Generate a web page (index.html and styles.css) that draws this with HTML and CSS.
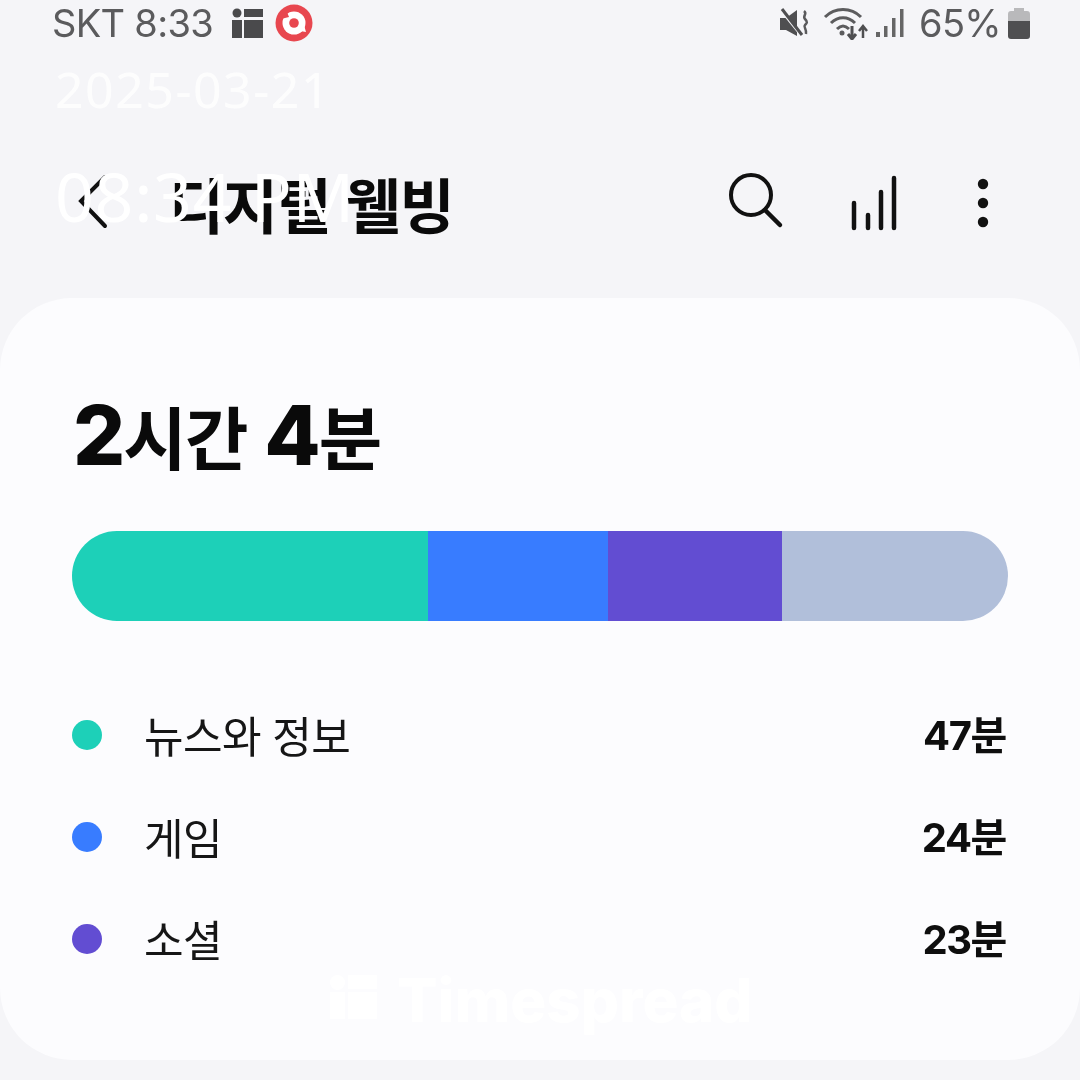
FILE: index.html
```html
<!DOCTYPE html>
<html lang="ko">
<head>
    <meta charset="utf-8">
    <title>디지털 웰빙</title>
    <link rel="stylesheet" href="styles.css">
</head>
<body>
    <div class="screen">
        <div class="status-bar">
            <div class="status-left">
                <span class="status-text">SKT 8:33</span>
                <svg class="icon-grid" width="31" height="30" viewBox="0 0 31 30">
                    <circle cx="5" cy="5" r="4.5" fill="#4a4a4c"/>
                    <rect x="12" y="1" width="19" height="8" fill="#4a4a4c"/>
                    <rect x="0" y="12" width="10" height="18" fill="#4a4a4c"/>
                    <rect x="12" y="12" width="19" height="18" fill="#4a4a4c"/>
                </svg>
                <svg class="icon-app" width="38" height="38" viewBox="0 0 38 38">
                    <circle cx="19" cy="19" r="18.5" fill="#e8474f"/>
                    <circle cx="19" cy="19" r="11.5" fill="#fff"/>
                    <path d="M25 27l6 1-2-7z" fill="#fff"/>
                    <path d="M6 15l6-7 2 5z" fill="#e8474f"/>
                    <circle cx="19" cy="19" r="4.8" fill="#e8474f"/>
                </svg>
            </div>
            <div class="status-right">
                <svg class="icon-mute" width="32" height="32" viewBox="0 0 32 32">
                    <path d="M1 11h6l11-8v26l-11-6h-6z" fill="#4f4f51"/>
                    <path d="M2 3l21 26" stroke="#f5f5f8" stroke-width="3"/>
                    <path d="M3 2l20 26" stroke="#4f4f51" stroke-width="3"/>
                    <path d="M25 4c4 3-2 5 1 8s2 4 0 6 2 4 1 9" fill="none" stroke="#5a5a5c" stroke-width="2.5"/>
                </svg>
                <svg class="icon-wifi" width="46" height="34" viewBox="0 0 46 34">
                    <path d="M2 11C12 1 28 1 38 11" fill="none" stroke="#5c5c5e" stroke-width="3"/>
                    <path d="M8 17c7-7 17-7 24 0" fill="none" stroke="#5c5c5e" stroke-width="3"/>
                    <path d="M14 23c4-4 8-4 12 0" fill="none" stroke="#5c5c5e" stroke-width="3"/>
                    <circle cx="19" cy="27" r="2.5" fill="#5c5c5e"/>
                    <path d="M29 20v11M25 28l4 5 4-5" fill="none" stroke="#4f4f51" stroke-width="3"/>
                    <path d="M40 32V20M36 25l4-5 4 5" fill="none" stroke="#4f4f51" stroke-width="2.5"/>
                </svg>
                <svg class="icon-signal" width="30" height="30" viewBox="0 0 30 30">
                    <rect x="1" y="24" width="4" height="5" fill="#666"/>
                    <rect x="9" y="18" width="3.5" height="11" fill="#666"/>
                    <rect x="17" y="10" width="3.5" height="19" fill="#666"/>
                    <rect x="25" y="1" width="3.5" height="28" fill="#666"/>
                </svg>
                <span class="status-text battery-text">65%</span>
                <svg class="icon-battery" width="22" height="32" viewBox="0 0 22 32">
                    <path d="M6 1h10v3h3a3 3 0 0 1 3 3v7H0V7a3 3 0 0 1 3-3h3z" fill="#b9b9bb"/>
                    <path d="M0 14h22v15a3 3 0 0 1-3 3H3a3 3 0 0 1-3-3z" fill="#4f4f51"/>
                </svg>
            </div>
        </div>

        <div class="app-bar">
            <svg class="icon-back" width="32" height="56" viewBox="0 0 32 56">
                <path d="M27 3L3 27l24 25" fill="none" stroke="#111" stroke-width="4" stroke-linecap="round"/>
            </svg>
            <h1 class="app-title">디지털 웰빙</h1>
            <div class="app-actions">
                <svg width="56" height="56" viewBox="0 0 56 56">
                    <circle cx="23" cy="22" r="20" fill="none" stroke="#111" stroke-width="4"/>
                    <path d="M37 37l15 15" stroke="#111" stroke-width="4.5" stroke-linecap="round"/>
                </svg>
                <svg class="icon-bars" width="50" height="56" viewBox="0 0 50 56">
                    <path d="M3 28v25M17 40v13M30 17v36M43 3v50" stroke="#111" stroke-width="4.5" stroke-linecap="round"/>
                </svg>
                <svg class="icon-more" width="12" height="50" viewBox="0 0 12 50">
                    <circle cx="6" cy="6" r="5.2" fill="#111"/>
                    <circle cx="6" cy="25" r="5.2" fill="#111"/>
                    <circle cx="6" cy="44" r="5.2" fill="#111"/>
                </svg>
            </div>
        </div>

        <div class="card">
            <div class="total"><b>2</b>시간 <b>4</b>분</div>
            <div class="usage-bar">
                <div class="seg seg-news"></div>
                <div class="seg seg-game"></div>
                <div class="seg seg-social"></div>
                <div class="seg seg-other"></div>
            </div>
            <div class="usage-list">
                <div class="usage-row">
                    <span class="dot dot-news"></span>
                    <span class="usage-name">뉴스와 정보</span>
                    <span class="usage-time">47분</span>
                </div>
                <div class="usage-row">
                    <span class="dot dot-game"></span>
                    <span class="usage-name">게임</span>
                    <span class="usage-time">24분</span>
                </div>
                <div class="usage-row">
                    <span class="dot dot-social"></span>
                    <span class="usage-name">소셜</span>
                    <span class="usage-time">23분</span>
                </div>
            </div>
        </div>
    </div>

    <div class="stamp">
        <div class="stamp-date">2025-03-21</div>
        <div class="stamp-time">08:34 PM</div>
    </div>

    <div class="watermark">
        <svg width="47" height="44" viewBox="0 0 47 44">
            <circle cx="7.5" cy="7.5" r="7.5" fill="#fff"/>
            <rect x="18" y="0" width="29" height="14" fill="#fff"/>
            <rect x="0" y="17" width="15" height="27" fill="#fff"/>
            <rect x="18" y="17" width="29" height="27" fill="#fff"/>
        </svg>
        <span class="watermark-text">Timespread</span>
    </div>
</body>
</html>
```

FILE: styles.css
```css
html, body {
    margin: 0;
    height: 1080px;
    overflow: hidden;
    background-color: #f5f5f8;
}

body {
    position: relative;
    font-family: "Noto Sans CJK KR", "Noto Sans", sans-serif;
}

.screen {
    height: 1080px;
    filter: blur(0.7px);
}

.status-bar {
    height: 46px;
    padding: 0 50px 0 52px;
    display: flex;
    justify-content: space-between;
    align-items: center;
}

.status-left, .status-right {
    display: flex;
    align-items: center;
}

.status-text {
    font-family: Inter, "Noto Sans", sans-serif;
    font-size: 38px;
    letter-spacing: -0.7px;
    color: #5b5b5d;
}

.icon-grid {
    margin-left: 19px;
}

.icon-app {
    margin-left: 12px;
}

.icon-wifi {
    margin-left: 12px;
}

.icon-signal {
    margin-left: 6px;
}

.battery-text {
    margin-left: 14px;
}

.icon-battery {
    margin-left: 7px;
}

.app-bar {
    height: 252px;
    box-sizing: border-box;
    padding: 128px 72px 0 78px;
    display: flex;
    align-items: flex-start;
}

.app-title {
    margin: -7px 0 0 59px;
    font-size: 60px;
    font-weight: 700;
    line-height: 72px;
    letter-spacing: -1.4px;
    color: #0a0a0a;
}

.app-actions {
    margin-left: auto;
    display: flex;
    gap: 42px;
    align-items: flex-start;
    margin-top: -1px;
}

.icon-bars {
    margin-left: 25px;
    margin-top: 2px;
}

.icon-more {
    margin-top: 5px;
    margin-left: 34px;
    margin-right: 19px;
}

.card {
    height: 762px;
    box-sizing: border-box;
    padding: 89px 72px 0;
    background-color: #fcfcfe;
    border-radius: 72px;
}

.total {
    height: 96px;
    font-size: 69px;
    font-weight: 700;
    line-height: 96px;
    letter-spacing: -1.8px;
    padding-left: 1px;
    color: #0a0a0a;
}

.total b {
    font-family: Inter, sans-serif;
    font-size: 82px;
    font-weight: 800;
    letter-spacing: -2px;
}

.usage-bar {
    margin-top: 48px;
    height: 90px;
    border-radius: 45px;
    overflow: hidden;
    display: flex;
}

.seg-news {
    width: 356px;
    background-color: #1dd0b8;
}

.seg-game {
    width: 180px;
    background-color: #387cff;
}

.seg-social {
    width: 174px;
    background-color: #624dd2;
}

.seg-other {
    flex: 1;
    background-color: #b1bfda;
}

.usage-list {
    margin-top: 64px;
    display: flex;
    flex-direction: column;
}

.usage-row {
    height: 102px;
    display: flex;
    align-items: center;
}

.dot {
    width: 30px;
    height: 30px;
    border-radius: 50%;
    margin-right: 42px;
    position: relative;
    top: -1px;
}

.dot-news {
    background-color: #1dd0b8;
}

.dot-game {
    background-color: #387cff;
}

.dot-social {
    background-color: #624dd2;
}

.usage-name {
    font-size: 43px;
    line-height: 50px;
    letter-spacing: -0.6px;
    margin-top: -5px;
    color: #161616;
}

.usage-time {
    margin-left: auto;
    padding-right: 2px;
    font-family: Inter, "Noto Sans CJK KR", sans-serif;
    font-size: 40px;
    line-height: 50px;
    margin-top: 0;
    font-weight: 700;
    letter-spacing: -1.4px;
    color: #0e0e0e;
}

.stamp {
    position: absolute;
    left: 55px;
    top: 55px;
    font-family: "Noto Sans", sans-serif;
    color: #fff;
}

.stamp-date {
    font-size: 50px;
    line-height: 68px;
    letter-spacing: 1.5px;
    opacity: 0.85;
}

.stamp-time {
    margin-top: 28px;
    font-size: 68px;
    line-height: 90px;
    letter-spacing: 0.7px;
}

.watermark {
    position: absolute;
    left: 330px;
    top: 975px;
    display: flex;
    align-items: flex-start;
    gap: 20px;
    color: #fff;
}

.watermark-text {
    font-family: Inter, sans-serif;
    font-size: 60px;
    font-weight: 800;
    line-height: 50px;
}
```
